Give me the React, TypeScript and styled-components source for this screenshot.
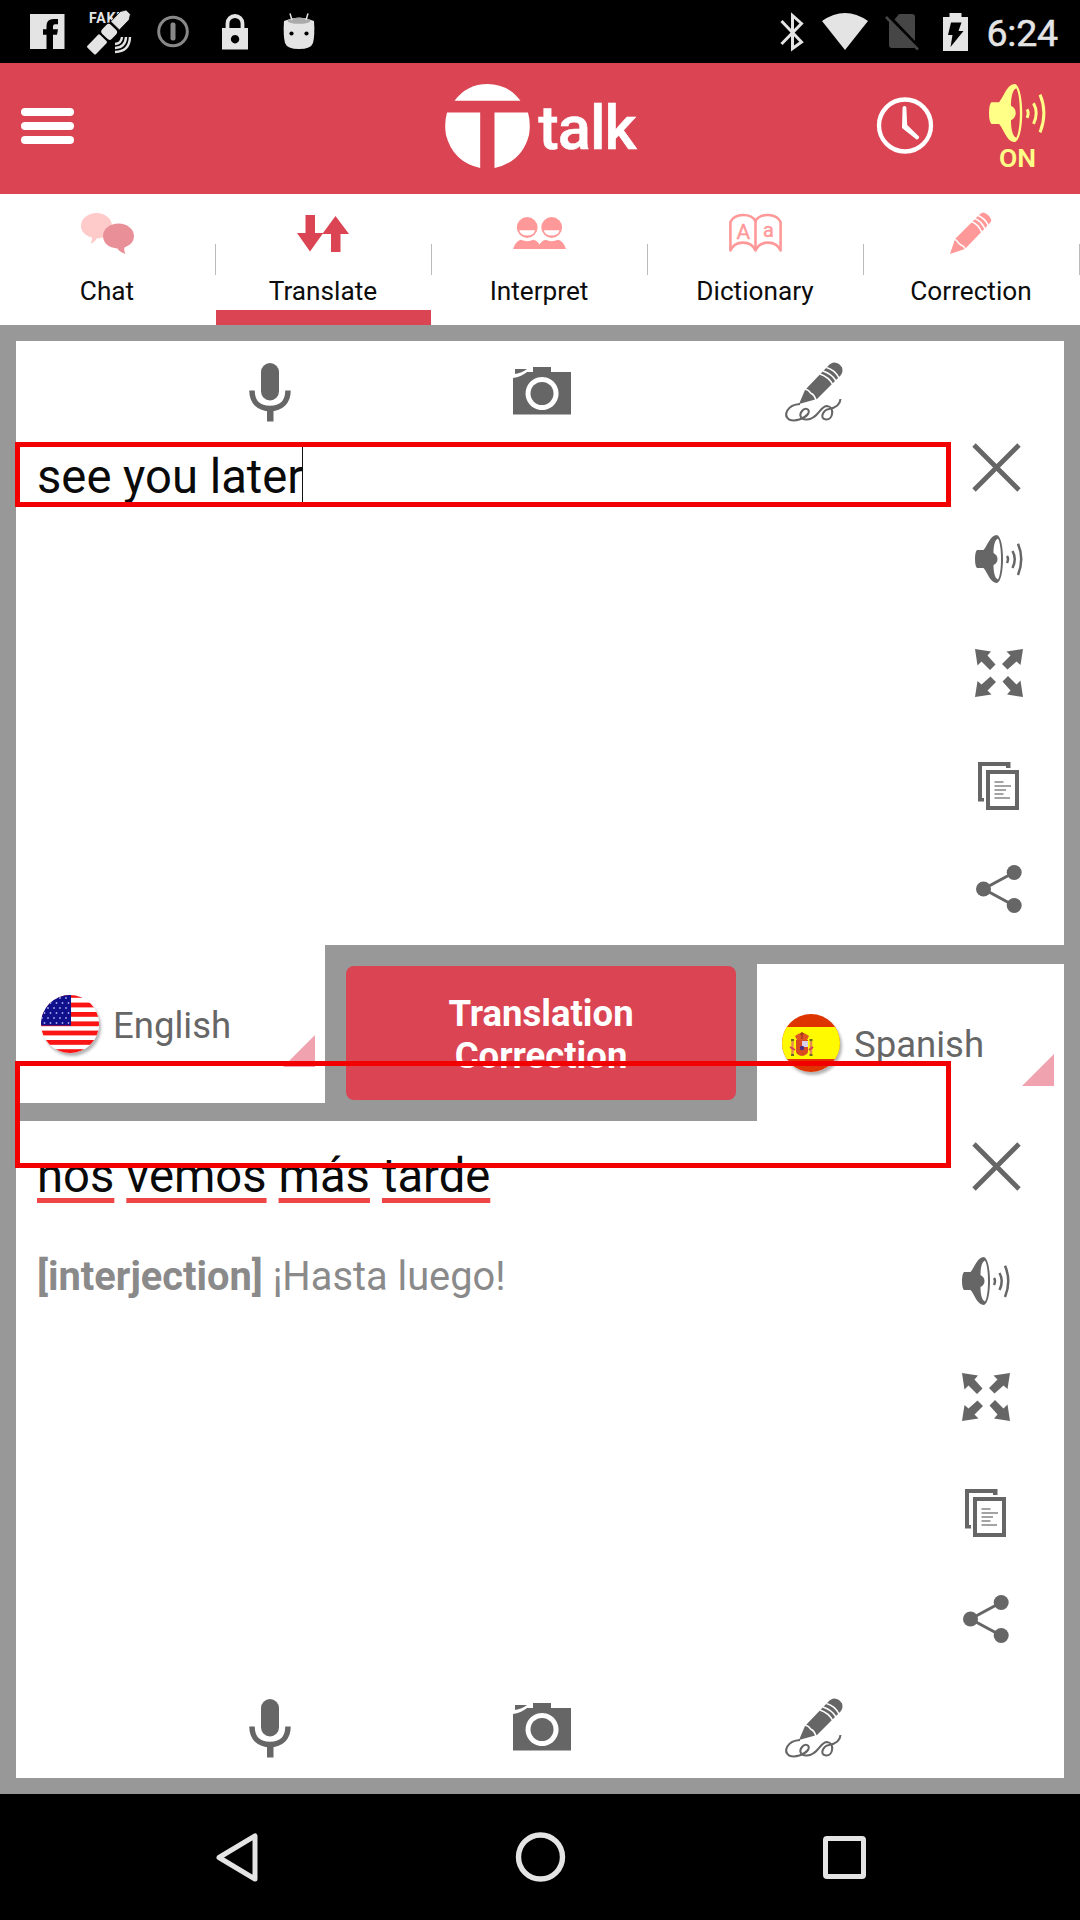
import React from 'react';
import styled, { createGlobalStyle } from 'styled-components';

const RED = '#da4453';
const GREY = '#989898';
const INK = '#666666';
const PINK = '#ff9999';
const STATUS = '#e4e4e4';

const GlobalStyle = createGlobalStyle`
  * { box-sizing: border-box; }
  body { margin: 0; background: #000; font-family: Roboto, "Liberation Sans", sans-serif; }
  svg { display: block; flex: none; overflow: visible; }
`;

const Screen = styled.div`
  position: relative;
  width: 1080px;
  height: 1920px;
  display: flex;
  flex-direction: column;
  overflow: hidden;
  background: #fff;
`;

const StatusBar = styled.div`
  height: 63px;
  flex: none;
  display: flex;
  justify-content: space-between;
  background: #000;
  padding: 0 22px 0 30px;
`;

const StatusGroup = styled.div`
  display: flex;
  align-items: center;
`;

const StatusItem = styled.div<{ $left?: number }>`
  margin-left: ${(p) => p.$left ?? 0}px;
`;

const Clock = styled.div`
  margin-left: 18px;
  font-size: 37.5px;
  line-height: 44px;
  padding-top: 3px;
  color: ${STATUS};
  -webkit-text-stroke: 0.5px ${STATUS};
  letter-spacing: -0.2px;
`;

const Header = styled.header`
  height: 131px;
  flex: none;
  display: grid;
  grid-template-columns: 1fr auto 1fr;
  align-items: center;
  padding: 0 34px 5px 21px;
  background: ${RED};
`;

const MenuButton = styled.div`
  display: flex;
  flex-direction: column;
  gap: 6.3px;
  width: 53px;
`;

const MenuBar = styled.span`
  height: 7.8px;
  border-radius: 4px;
  background: #fff;
`;

const Brand = styled.div`
  display: flex;
  align-items: center;
  gap: 8px;
  height: 84px;
  margin-left: 14px;
`;

const BrandName = styled.span`
  color: #fff;
  font-size: 61.5px;
  font-weight: 500;
  line-height: 72px;
  padding-top: 4px;
  letter-spacing: -1px;
  -webkit-text-stroke: 0.5px #fff;
`;

const HeaderActions = styled.div`
  display: flex;
  justify-content: flex-end;
  align-items: center;
  gap: 56px;
`;

const HistoryButton = styled.div`
  padding-bottom: 1px;
`;

const SoundToggle = styled.div`
  width: 57px;
  height: 84px;
  display: flex;
  flex-direction: column;
  color: #ffff88;
`;

const SoundLabel = styled.span`
  margin-top: 1px;
  font-size: 26.5px;
  line-height: 30px;
  font-weight: 600;
  text-align: center;
`;

const Tabs = styled.nav`
  height: 131px;
  flex: none;
  display: grid;
  grid-template-columns: repeat(5, 216px);
  background: #fff;
`;

const Tab = styled.div`
  display: flex;
`;

const TabBody = styled.div<{ $active?: boolean }>`
  flex: 1;
  display: flex;
  flex-direction: column;
  align-items: center;
  padding-right: 1px;
  border-bottom: 15px solid ${(p) => (p.$active ? RED : 'transparent')};
`;

const TabIcon = styled.div`
  height: 78px;
  display: flex;
  align-items: center;
  justify-content: center;
`;

const TabLabel = styled.span`
  margin-top: 2.5px;
  font-size: 26.2px;
  line-height: 32px;
  color: #0c0c0c;
`;

const TabDivider = styled.span`
  width: 1px;
  height: 31px;
  margin-top: 50px;
  background: #bbb;
`;

const Workspace = styled.main`
  flex: 1;
  display: flex;
  flex-direction: column;
  padding: 16px;
  background: ${GREY};
`;

const Panel = styled.section<{ $height: number }>`
  height: ${(p) => p.$height}px;
  flex: none;
  display: flex;
  flex-direction: column;
  background: #fff;
`;

const Toolbar = styled.div`
  height: 101px;
  flex: none;
  display: grid;
  grid-template-columns: repeat(3, 272px);
  margin-left: 118px;
  align-items: center;
  justify-items: center;
`;

const PanelBody = styled.div`
  flex: 1;
  display: flex;
  justify-content: space-between;
`;

const TextColumn = styled.div<{ $top: number }>`
  padding: ${(p) => p.$top}px 0 0 21px;
`;

const Phrase = styled.div<{ $gap?: number }>`
  display: flex;
  align-items: center;
  gap: ${(p) => p.$gap ?? 0}px;
  height: 69px;
  font-size: 47.2px;
  line-height: 69px;
  color: #0a0a0a;
`;

const Caret = styled.span`
  width: 1px;
  height: 56px;
  margin: 0 0 7px -1px;
  background: #111;
`;

const Word = styled.span`
  text-decoration: underline 5px #f04545;
  text-underline-offset: 6px;
`;

const Meaning = styled.div`
  margin-top: 42px;
  font-size: 39.8px;
  line-height: 48px;
  color: #8a8a8a;
`;

const Rail = styled.div<{ $shift?: number }>`
  width: 108px;
  display: flex;
  flex-direction: column;
  padding-left: ${(p) => 19 - (p.$shift ?? 0)}px;
`;

const RailButton = styled.div<{ $top: number; $left?: number }>`
  margin-top: ${(p) => p.$top}px;
  margin-left: ${(p) => p.$left ?? 0}px;
`;

const LanguageRow = styled.section`
  height: 176px;
  flex: none;
  display: grid;
  grid-template-columns: 309px 432px 307px;
`;

const Language = styled.div<{ $target?: boolean }>`
  display: flex;
  align-items: center;
  height: ${(p) => (p.$target ? 157 : 158)}px;
  align-self: ${(p) => (p.$target ? 'end' : 'start')};
  padding: 0 10px 0 25px;
  background: #fff;
`;

const Flag = styled.div`
  width: 58px;
  height: 58px;
  border-radius: 50%;
  overflow: hidden;
  box-shadow: 2px 3px 3px rgba(0, 0, 0, 0.3);
`;

const LanguageName = styled.span`
  margin-left: 14px;
  padding-top: 4px;
  font-size: 36.5px;
  line-height: 42px;
  color: ${INK};
`;

const Corner = styled.span`
  width: 32px;
  height: 32px;
  margin: 90px 0 0 auto;
  align-self: flex-start;
  background: #f0a3af;
  clip-path: polygon(100% 0, 100% 100%, 0 100%);
`;

const ButtonSlot = styled.div`
  display: flex;
  padding: 21px;
`;

const CorrectionButton = styled.button`
  flex: 1;
  border: 0;
  border-radius: 8px;
  background: ${RED};
  color: #fff;
  font: 700 36.5px/42px Roboto, "Liberation Sans", sans-serif;
  padding: 4px 90px 0;
  text-align: center;
`;

const Highlight = styled.div<{ $top: number; $height: number }>`
  position: absolute;
  left: 15px;
  top: ${(p) => p.$top}px;
  width: 936px;
  height: ${(p) => p.$height}px;
  border: 5px solid #f20000;
`;

const NavBar = styled.footer`
  height: 126px;
  flex: none;
  display: flex;
  align-items: center;
  justify-content: space-between;
  padding: 0 214px 0 216px;
  background: #000;
`;

const FacebookIcon = () => (
  <svg width="35" height="35" viewBox="0 0 35 35">
    <path fill={STATUS} d="M0 0H34.500V35H23V20.700H27L28 15.300H23V12.500Q23 10.300 25 10.300H28V5H23.500Q16.500 5 16.500 12V15.300H13V20.700H16.500V35H0Z" />
  </svg>
);

const SatelliteIcon = () => (
  <svg width="44" height="44" viewBox="0 0 44 44">
    <text x="1" y="13" fontFamily="Roboto, sans-serif" fontWeight="700" fontSize="14" letterSpacing="0.8" fill={STATUS}>FAKE</text>
    <g transform="translate(21.5 21.5) rotate(-46)">
      <rect x="-27" y="-6" width="18" height="12" rx="1.5" fill={STATUS} />
      <rect x="-7.5" y="-7.5" width="14" height="15" rx="4" fill={STATUS} stroke="#000" strokeWidth="1.5" />
      <path d="M8-6H22L27-3V3L22 6H8Z" fill={STATUS} stroke="#000" strokeWidth=".7" />
    </g>
    <g fill="none" stroke={STATUS} strokeWidth="2.4">
      <path d="M34 27Q33.500 33.500 27 34" />
      <path d="M38 27Q37.500 37.500 27 38" />
      <path d="M42 27Q41.500 41.500 27 42" />
    </g>
  </svg>
);

const KeyholeIcon = () => (
  <svg width="32" height="33" viewBox="0 0 32 33">
    <circle cx="16" cy="16.500" r="14.300" fill="none" stroke="#888" strokeWidth="3" />
    <rect x="13.500" y="7.500" width="5" height="18" rx="2" fill="#888" />
  </svg>
);

const LockIcon = () => (
  <svg width="26" height="36" viewBox="0 0 26 36">
    <path d="M5.500 15V9.500a7.500 7.500 0 0 1 15 0V15" fill="none" stroke={STATUS} strokeWidth="3.800" />
    <path fillRule="evenodd" fill={STATUS} d="M0 14H26V35.500H0ZM13 21a4.200 4.200 0 1 0 .1 0Z" />
  </svg>
);

const MarshmallowIcon = () => (
  <svg width="30" height="38" viewBox="0 0 30 38">
    <path d="M0 8Q15 1 30 8Q31 22 29 30Q27 36 15 36Q3 36 1 30Q-1 22 0 8Z" fill={STATUS} />
    <ellipse cx="15" cy="7.800" rx="11.500" ry="3" fill="#aaa" />
    <path d="M6 0.500L8 7M24 0.500L22 7" stroke={STATUS} strokeWidth="1.500" />
    <circle cx="7.500" cy="20.500" r="2.100" />
    <circle cx="22.500" cy="20.500" r="2.100" />
  </svg>
);

const BluetoothIcon = () => (
  <svg width="24" height="38" viewBox="0 0 24 38">
    <path d="M1.500 8L21.500 29L12.500 35.500V2.500L21.500 10.500L1.500 31" fill="none" stroke={STATUS} strokeWidth="3" />
  </svg>
);

const WifiIcon = () => (
  <svg width="46" height="37" viewBox="0 0 46 37">
    <path d="M0 8Q23-8 46 8L23 37Z" fill={STATUS} />
  </svg>
);

const NoSimIcon = () => (
  <svg width="34" height="36" viewBox="0 0 34 36">
    <path d="M14 0H27Q30 0 30 3V27L9.500 5.500ZM4 6L30 33L29 34H7Q4 34 4 31Z" fill="#464646" />
    <path d="M1 3L33 35.500" stroke="#464646" strokeWidth="2.600" />
  </svg>
);

const BatteryIcon = () => (
  <svg width="25" height="38" viewBox="0 0 25 38">
    <path d="M0 4H6.500V0H18.500V4H25V38H0Z" fill={STATUS} />
    <path d="M8 9.500H18.500L15.500 18H20.500L7.500 34L9.500 22H5Z" fill="#000" />
  </svg>
);

const LogoMark = () => (
  <svg width="85" height="85" viewBox="0 0 85 85">
    <path fill="#fff" d="M9.500 16.800Q22 0 42.500 0Q63 0 75.500 16.800ZM2 28.500H35.200V84Q8 78 1 51Q-1 39 2 28.500ZM49.500 28.500H83Q86 39 84 51Q77 78 49.500 84Z" />
  </svg>
);

const HistoryIcon = () => (
  <svg width="56" height="57" viewBox="0 0 56 57">
    <circle cx="28" cy="28.500" r="26" fill="none" stroke="#fff" strokeWidth="4.300" />
    <path d="M25.600 10Q27.500 8 29.300 10L30.200 28L42 39.500Q42.500 42 39.500 42.500L25 31Z" fill="#fff" />
  </svg>
);

const SpeakerIcon = ({ width = 48, height = 48, color = INK }: { width?: number; height?: number; color?: string }) => (
  <svg width={width} height={height} viewBox="0 0 48 48" preserveAspectRatio="none">
    <path fillRule="evenodd" fill={color} d="M2 15H8.500C13 10 15 0 22 0C30 3 30 45 22 48C15 48 13 38 8.500 33H2Q0 31 0 24T2 15ZM23 3.500C19 5 18.500 14 18.500 18Q22.500 20 22.500 24T18.500 30C18.500 34 19 43 23 44.500C27 38 27 10 23 3.500Z" />
    <g fill="none" stroke={color} strokeWidth="2.500">
      <path d="M32 21Q34 24 32 28" />
      <path d="M37.500 16Q42 24 37.500 33" />
      <path d="M43 8.800Q49.500 24 43 40" />
    </g>
  </svg>
);

const ChatIcon = () => (
  <svg width="53" height="41" viewBox="0 0 53 41">
    <path d="M15.500 0C24 0 31 5.500 31 13S24 25.500 15.500 25.500Q14 29 9.500 30.500Q11.500 27 11 24.500C4.500 23 0 18.500 0 13C0 5.500 7 0 15.500 0Z" fill="#ffcaca" />
    <path d="M37.500 10.500C46 10.500 53 16 53 23Q53 31 43.500 34.500Q42.500 37 44.500 41Q38 38.500 36.500 35.500C28 35 22 30 22 23C22 16 29 10.500 37.500 10.500Z" fill="#e98f98" />
  </svg>
);

const SwapIcon = () => (
  <svg width="52" height="37" viewBox="0 0 52 37">
    <path fill={RED} d="M8.500 0H18V18H26L38.500 1L52 19H43.500V37H34V19H25.500L13 36.500L0 18H8.500Z" />
  </svg>
);

const PeopleIcon = () => (
  <svg width="53" height="32" viewBox="0 0 53 32">
    {[0, 24.500].map((x) => (
      <g key={x} transform={`translate(${x} 0)`}>
        <circle cx="14.200" cy="10.500" r="10.400" fill={PINK} />
        <path d="M6.200 13.300H22.200Q20.500 18.600 14.200 18.600T6.200 13.300Z" fill="#fff" />
        <path d="M0 32Q2.500 24 8 22.800Q14.200 25.500 20.500 22.800Q26 24 28.500 32Z" fill={PINK} />
      </g>
    ))}
  </svg>
);

const DictionaryIcon = () => (
  <svg width="53" height="38" viewBox="0 0 53 38">
    <g fill="none" stroke={PINK} strokeWidth="2.600" strokeLinejoin="round">
      <path d="M26.500 7C22-1 6-1.500 1.400 8V36.500C6 26 22 26 26.500 36.500C31 26 47 26 51.600 36.500V8C47-1.500 31-1 26.500 7Z" />
      <path d="M26.500 7V36" />
    </g>
    <text x="7.500" y="24.500" fontFamily="Roboto, sans-serif" fontSize="21" stroke={PINK} strokeWidth="0.400" fill={PINK}>A</text>
    <text x="34" y="22.500" fontFamily="Roboto, sans-serif" fontSize="20" stroke={PINK} strokeWidth="0.400" fill={PINK}>a</text>
  </svg>
);

const PencilIcon = () => (
  <svg width="42" height="42" viewBox="0 0 42 42">
    <path d="M0 42L5 27L29 3Q33-2 38 3Q44 8 39 12L15 37Z" fill={PINK} />
    <g fill="none" stroke="#fff" strokeWidth="1.500">
      <path d="M4 27Q7 28 8.500 31L11 33Q14 34 15.500 37" />
      <path d="M20 9Q29 12 32 21M23.500 6Q32 9 35.500 18M27 3Q35 6 38.500 14" />
    </g>
  </svg>
);

const MicIcon = () => (
  <svg width="42" height="58" viewBox="0 0 42 58">
    <rect x="12" y="0" width="18" height="37.500" rx="9" fill={INK} />
    <path d="M3 27.500C3 39 10 45.500 21 45.500S39 39 39 27.500" fill="none" stroke={INK} strokeWidth="5.500" />
    <rect x="18" y="45" width="6.500" height="13.500" fill={INK} />
  </svg>
);

const CameraIcon = () => (
  <svg width="58" height="49" viewBox="0 0 58 49">
    <path fill={INK} fillRule="evenodd" d="M0 11Q8 10 14 5H20V0H38V5H58V47.500H0ZM29 10A16.500 16.500 0 1 0 29.100 10ZM2 2H14Q9 6 2 7Z" />
    <circle cx="29" cy="26.500" r="11.500" fill={INK} />
  </svg>
);

const HandwritingIcon = () => (
  <svg width="58" height="59" viewBox="0 0 58 59">
    <path d="M14 42L20 28L43 4Q48-2 54 2Q60 7 56 13L32 37Z" fill={INK} />
    <g fill="none" stroke="#fff" strokeWidth="1.600">
      <path d="M20 27Q24 28 25.500 31Q30 33 31 39" />
      <path d="M35 12Q44 15 48 23M38 9Q47 12 51 19M41.500 5.500Q50 8 54 16" />
    </g>
    <path d="M15 42C2 43-2 53 4 57.500C10 60 19 57 23 52C26 47 20 45 17 49C13 54 17 58 22 57.500C33 57 35 44 42 44C50 45 48 58 41 57.500C34 57 38 48 44 47C50 46 55 43 55.500 37" fill="none" stroke={INK} strokeWidth="2.100" />
  </svg>
);

const CloseIcon = () => (
  <svg width="49" height="49" viewBox="0 0 49 49">
    <path d="M2 2L47 47M47 2L2 47" stroke={INK} strokeWidth="4.800" />
  </svg>
);

const ExpandIcon = () => (
  <svg width="48" height="48" viewBox="0 0 48 48">
    {[0, 90, 180, 270].map((a) => (
      <path key={a} transform={`rotate(${a} 24 24)`} fill={INK} d="M0 0L16 2.500L12.500 6.500L20.500 15.500L15 21L6.500 12.500L2.500 16.500Z" />
    ))}
  </svg>
);

const CopyIcon = () => (
  <svg width="41" height="48" viewBox="0 0 41 48">
    <path d="M32.500 6V0H0V39.500H6V36H4V4H28V6Z" fill={INK} />
    <rect x="10" y="10" width="29" height="36" fill="#fff" stroke={INK} strokeWidth="4" />
    <path d="M16.500 20H25.500M16.500 24H33M16.500 28H28M16.500 32H25.500M16.500 36H32" stroke="#858585" strokeWidth="1.300" />
  </svg>
);

const ShareIcon = () => (
  <svg width="46" height="48" viewBox="0 0 46 48">
    <path d="M38 7.500L7.500 24L38 40.500" fill="none" stroke={INK} strokeWidth="3" />
    <circle cx="38.200" cy="7.500" r="7.500" fill={INK} />
    <circle cx="7.500" cy="24" r="7.500" fill={INK} />
    <circle cx="38.200" cy="40.500" r="7.500" fill={INK} />
  </svg>
);

const UsFlag = () => (
  <svg width="58" height="58" viewBox="0 0 58 58">
    <rect width="58" height="58" fill="#fff" />
    {[-2, 7.600, 17, 26.400, 35.600, 45, 54.200].map((y) => (
      <rect key={y} y={y} width="58" height="4.800" fill="#fb1515" />
    ))}
    <rect width="30" height="30.500" fill="#10108c" />
    {[3, 8, 13, 18, 23, 28].map((y, r) =>
      [2, 8, 14, 20, 26].map((x) => <circle key={`${x}-${y}`} cx={x + (r % 2 ? 1.500 : -1)} cy={y} r="0.900" fill="#a9a9ee" />)
    )}
  </svg>
);

const SpainFlag = () => (
  <svg width="58" height="58" viewBox="0 0 58 58">
    <rect width="58" height="58" fill="#de3500" />
    <rect y="13" width="58" height="32" fill="#fffa00" />
    <path d="M13 22Q20 16 27 22L25 26H15Z" fill="#e05520" />
    <path d="M18 20H22M20 18V25" stroke="#a33c20" strokeWidth="1.500" />
    <path d="M14 26H26V38Q25 41 20 42Q15 41 14 38Z" fill="#d94a20" />
    <rect x="20" y="27" width="6" height="6" fill="#d9cfe8" />
    <circle cx="20" cy="34" r="2.200" fill="#4d2d86" />
    <path d="M10.500 27V40M29 27V40" stroke="#e88a50" strokeWidth="2.500" />
    <path d="M8 33L13 36M27 36L31 33" stroke="#d2405a" strokeWidth="2" />
    <path d="M9 26H12M27.500 26H30.500M9 41H12M27.500 41H30.500" stroke="#6b6a22" strokeWidth="2" />
  </svg>
);

const BackIcon = () => (
  <svg width="42" height="49" viewBox="0 0 42 49">
    <path d="M39 3V46L3 24.500Z" fill="none" stroke={STATUS} strokeWidth="5" strokeLinejoin="round" />
  </svg>
);

const HomeIcon = () => (
  <svg width="50" height="50" viewBox="0 0 50 50">
    <circle cx="24.500" cy="25" r="22" fill="none" stroke={STATUS} strokeWidth="5.400" />
  </svg>
);

const RecentsIcon = () => (
  <svg width="43" height="43" viewBox="0 0 43 43">
    <rect x="2.500" y="2.500" width="38" height="38" rx="1.500" fill="none" stroke={STATUS} strokeWidth="5" />
  </svg>
);

const TABS = [
  { label: 'Chat', icon: <ChatIcon /> },
  { label: 'Translate', icon: <SwapIcon />, active: true },
  { label: 'Interpret', icon: <PeopleIcon /> },
  { label: 'Dictionary', icon: <DictionaryIcon /> },
  { label: 'Correction', icon: <PencilIcon /> },
];

const InputTools = () => (
  <Toolbar>
    <MicIcon />
    <CameraIcon />
    <HandwritingIcon />
  </Toolbar>
);

export default function App() {
  return (
    <Screen>
      <GlobalStyle />
      <StatusBar>
        <StatusGroup>
          <StatusItem><FacebookIcon /></StatusItem>
          <StatusItem $left={23}><SatelliteIcon /></StatusItem>
          <StatusItem $left={25}><KeyholeIcon /></StatusItem>
          <StatusItem $left={33}><LockIcon /></StatusItem>
          <StatusItem $left={36}><MarshmallowIcon /></StatusItem>
        </StatusGroup>
        <StatusGroup>
          <StatusItem><BluetoothIcon /></StatusItem>
          <StatusItem $left={18}><WifiIcon /></StatusItem>
          <StatusItem $left={17}><NoSimIcon /></StatusItem>
          <StatusItem $left={24}><BatteryIcon /></StatusItem>
          <Clock>6:24</Clock>
        </StatusGroup>
      </StatusBar>

      <Header>
        <MenuButton>
          <MenuBar />
          <MenuBar />
          <MenuBar />
        </MenuButton>
        <Brand>
          <LogoMark />
          <BrandName>talk</BrandName>
        </Brand>
        <HeaderActions>
          <HistoryButton><HistoryIcon /></HistoryButton>
          <SoundToggle>
            <SpeakerIcon width={57} height={58} color="#ffff88" />
            <SoundLabel>ON</SoundLabel>
          </SoundToggle>
        </HeaderActions>
      </Header>

      <Tabs>
        {TABS.map((tab) => (
          <Tab key={tab.label}>
            <TabBody $active={tab.active}>
              <TabIcon>{tab.icon}</TabIcon>
              <TabLabel>{tab.label}</TabLabel>
            </TabBody>
            <TabDivider />
          </Tab>
        ))}
      </Tabs>

      <Workspace>
        <Panel $height={604}>
          <InputTools />
          <PanelBody>
            <TextColumn $top={1}>
              <Phrase>see you later<Caret /></Phrase>
            </TextColumn>
            <Rail>
              <RailButton $top={1} $left={-3}><CloseIcon /></RailButton>
              <RailButton $top={43}><SpeakerIcon /></RailButton>
              <RailButton $top={66}><ExpandIcon /></RailButton>
              <RailButton $top={65} $left={3}><CopyIcon /></RailButton>
              <RailButton $top={55} $left={1}><ShareIcon /></RailButton>
            </Rail>
          </PanelBody>
        </Panel>

        <LanguageRow>
          <Language>
            <Flag><UsFlag /></Flag>
            <LanguageName>English</LanguageName>
            <Corner />
          </Language>
          <ButtonSlot>
            <CorrectionButton>Translation Correction</CorrectionButton>
          </ButtonSlot>
          <Language $target>
            <Flag><SpainFlag /></Flag>
            <LanguageName>Spanish</LanguageName>
            <Corner />
          </Language>
        </LanguageRow>

        <Panel $height={657}>
          <PanelBody>
            <TextColumn $top={21}>
              <Phrase $gap={12}>
                <Word>nos</Word>
                <Word>vemos</Word>
                <Word>más</Word>
                <Word>tarde</Word>
              </Phrase>
              <Meaning><b>[interjection]</b> ¡Hasta luego!</Meaning>
            </TextColumn>
            <Rail $shift={13}>
              <RailButton $top={21} $left={10}><CloseIcon /></RailButton>
              <RailButton $top={66}><SpeakerIcon /></RailButton>
              <RailButton $top={68}><ExpandIcon /></RailButton>
              <RailButton $top={68} $left={3}><CopyIcon /></RailButton>
              <RailButton $top={58} $left={1}><ShareIcon /></RailButton>
            </Rail>
          </PanelBody>
          <InputTools />
        </Panel>
      </Workspace>

      <NavBar>
        <BackIcon />
        <HomeIcon />
        <RecentsIcon />
      </NavBar>

      <Highlight $top={442} $height={65} />
      <Highlight $top={1061} $height={107} />
    </Screen>
  );
}
